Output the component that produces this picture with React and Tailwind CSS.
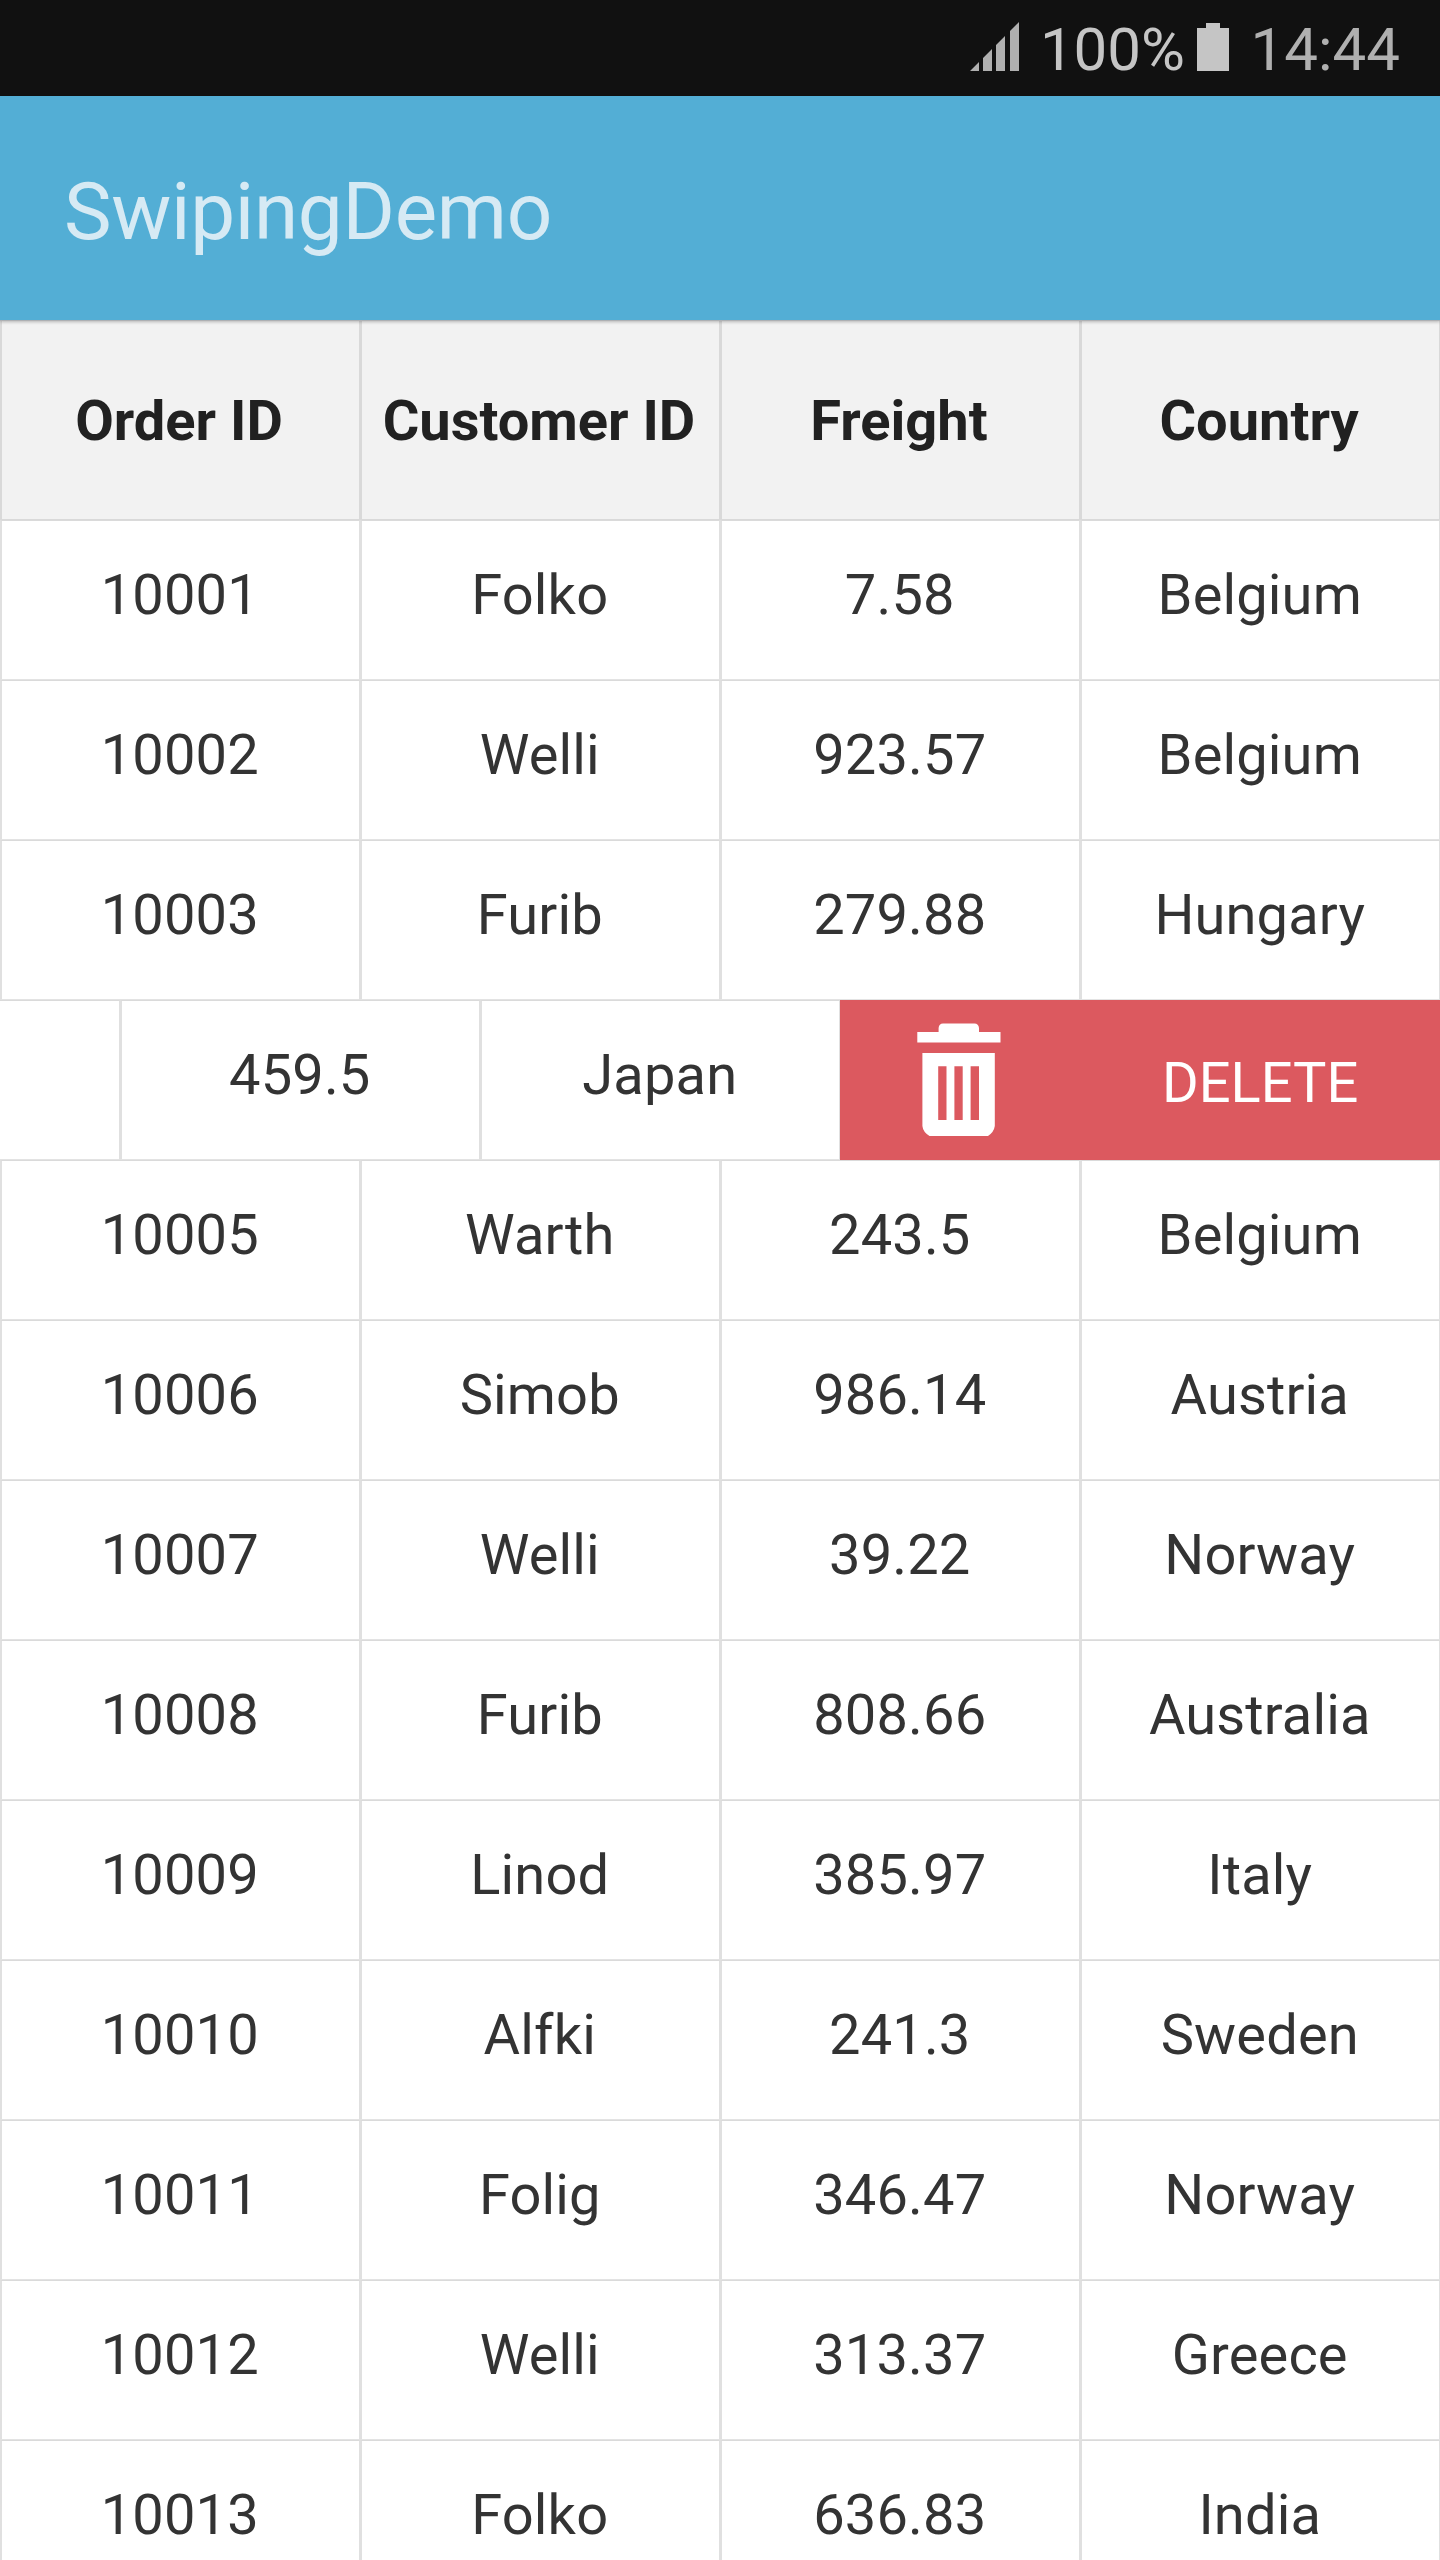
const HEAD = ["Order ID", "Customer ID", "Freight", "Country"];
const TOP = [
  ["10001", "Folko", "7.58", "Belgium"],
  ["10002", "Welli", "923.57", "Belgium"],
  ["10003", "Furib", "279.88", "Hungary"],
];
const BOTTOM = [
  ["10005", "Warth", "243.5", "Belgium"],
  ["10006", "Simob", "986.14", "Austria"],
  ["10007", "Welli", "39.22", "Norway"],
  ["10008", "Furib", "808.66", "Australia"],
  ["10009", "Linod", "385.97", "Italy"],
  ["10010", "Alfki", "241.3", "Sweden"],
  ["10011", "Folig", "346.47", "Norway"],
  ["10012", "Welli", "313.37", "Greece"],
  ["10013", "Folko", "636.83", "India"],
];

function Cell({ children }) {
  return (
    <div className="h-[160px] w-[360px] shrink-0 border border-l-2 border-x-[#e0e0e0] border-t-[#dadada] border-b-[#e3e3e3] pt-[41px] pr-[1.5px] text-center text-[56px] leading-[66px] tracking-[0.15px] text-[#333333]">
      {children}
    </div>
  );
}

function Row({ cells }) {
  return (
    <div className="flex">
      {cells.map((c, i) => (
        <Cell key={i}>{c}</Cell>
      ))}
    </div>
  );
}

function SwipedRow() {
  return (
    <div className="flex h-[160px] justify-end">
      <Cell />
      <Cell>459.5</Cell>
      <Cell>Japan</Cell>
      <div className="flex w-[600px] shrink-0 bg-[#dc595f]">
        <svg className="mt-[23px] ml-[77px] h-[114px] w-[84px] shrink-0" viewBox="0 0 84 114" fill="#fff">
          <path d="M0.3 9H21.6V5Q22 0.5 26 0.5H57.5Q61.5 0.5 62 5V9H83.5V19.6H0.3Z" />
          <path
            fillRule="evenodd"
            d="M5.4 30H77.8V103Q77 109 71 113H12.5Q6 109 5.4 103ZM21.2 43.3V97H29.5V43.3ZM37.4 43.3V97H45.7V43.3ZM53.6 43.3V97H62V43.3Z"
          />
        </svg>
        <div className="ml-[161px] pt-[50px] text-[56px] leading-[66px] text-white">DELETE</div>
      </div>
    </div>
  );
}

export default function App() {
  return (
    <div className="h-[2560px] w-[1440px] overflow-hidden bg-white font-['Roboto',sans-serif]">
      <div className="flex h-[96px] justify-end bg-[#111111] pr-[40px] text-[60px] leading-[99px] text-[#c5c5c5]">
        <svg className="mt-[22px] h-[49px] w-[49px]" viewBox="0 0 49 49" fill="#b0b0b0">
          <path d="M0 49L9 40V49ZM13 49V36L22 27V49ZM26 49V23L35 14V49ZM40 49V9L49 0V49Z" />
        </svg>
        <span className="ml-[20px] w-[146px] text-right">100%</span>
        <svg className="mt-[23px] ml-[12px] h-[48px] w-[32px]" viewBox="0 0 32 48" fill="#c5c5c5">
          <path d="M9 0H23V5H32V48H0V5H9Z" />
        </svg>
        <span className="ml-[21px] w-[150px] text-right text-[#b0b0b0]">14:44</span>
      </div>
      <div className="relative h-[224px] bg-[#53aed5] pt-[69px] pl-[64px] text-[80px] leading-[94px] tracking-[-0.3px] text-[#d6eaf4] shadow-[0_1px_0_#aeb0b3,0_2px_3px_rgba(0,0,0,0.25)]">
        SwipingDemo
      </div>
      <div className="flex">
        {HEAD.map((h) => (
          <div
            key={h}
            className="h-[200px] w-[360px] border border-l-2 border-[#d9d9d9] bg-[#f2f2f2] pt-[67px] pr-[3px] text-center text-[56px] leading-[66px] font-bold text-[#212121]"
          >
            {h}
          </div>
        ))}
      </div>
      {TOP.map((r) => (
        <Row key={r[0]} cells={r} />
      ))}
      <SwipedRow />
      {BOTTOM.map((r) => (
        <Row key={r[0]} cells={r} />
      ))}
    </div>
  );
}
